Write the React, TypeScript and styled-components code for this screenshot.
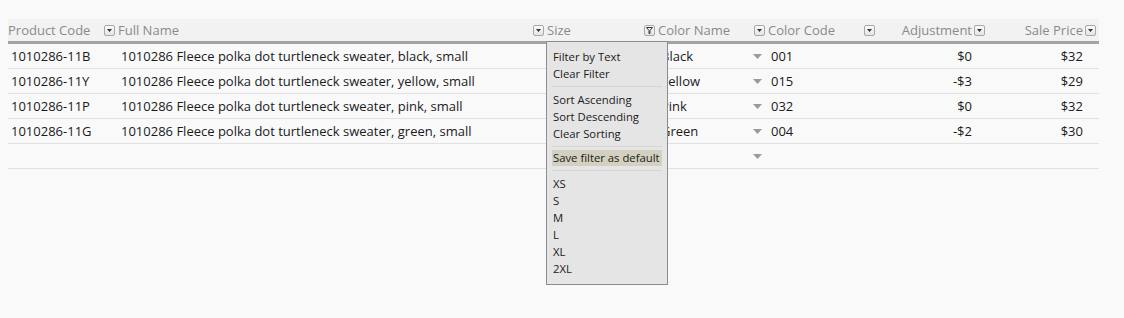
import React from "react";
import styled, { createGlobalStyle } from "styled-components";

const Global = createGlobalStyle`
  html, body { margin: 0; padding: 0; background: #f9f9f9; }
  body { font-family: "Open Sans", "Noto Sans", sans-serif; }
`;

const Page = styled.div`
  padding: 19px 0 0 8px;
  width: 1124px;
  height: 318px;
  box-sizing: border-box;
`;

const Table = styled.div`
  position: relative;
  width: 1091px;
  display: grid;
  grid-template-columns: 110px 429px 111px 110px 110px 110px 111px;
`;

const HeadCell = styled.div<{ $num?: boolean }>`
  height: 22px;
  background: #f2f2f2;
  border-bottom: 3px solid #a3a3a3;
  display: flex;
  align-items: center;
  justify-content: ${(p) => (p.$num ? "flex-end" : "space-between")};
  gap: 2px;
  padding: 0 3px 0 0;
  font-size: 13px;
  color: #8a8a8a;
  position: relative;
  white-space: nowrap;
`;

const IconBox = styled.span`
  width: 11px;
  height: 11px;
  box-sizing: border-box;
  border: 1px solid #a8a8a8;
  border-radius: 2px;
  background: linear-gradient(#fbfbfb, #e4e4e4);
  display: inline-flex;
  align-items: center;
  justify-content: center;
  flex: none;
`;

const Cell = styled.div<{ $num?: boolean }>`
  height: 25px;
  box-sizing: border-box;
  border-bottom: 1px solid #e1e1e1;
  display: flex;
  align-items: center;
  justify-content: ${(p) => (p.$num ? "flex-end" : "space-between")};
  padding: 0 ${(p) => (p.$num ? "16px" : "6px")} 0 3px;
  font-size: 13px;
  color: #1a1a1a;
  white-space: nowrap;
  overflow: hidden;
`;

const Menu = styled.div`
  position: absolute;
  left: 538px;
  top: 22px;
  width: 122px;
  height: 244px;
  box-sizing: border-box;
  background: #e5e5e5;
  border: 1px solid #8c8c8c;
  padding: 6px 5px 0 5px;
  font-size: 11.3px;
  color: #1a1a1a;
  z-index: 2;
`;

const Item = styled.div<{ $active?: boolean }>`
  height: ${(p) => (p.$active ? "16px" : "17px")};
  line-height: ${(p) => (p.$active ? "16px" : "17px")};
  padding-left: 1px;
  background: ${(p) => (p.$active ? "#d3d0c0" : "transparent")};
`;

const Sep = styled.div<{ $tight?: boolean }>`
  height: 1px;
  background: #d4d4d4;
  margin: 4px 0 ${(p) => (p.$tight ? "3px" : "4px")};
`;

const Arrow = () => (
  <svg width="9" height="5" viewBox="0 0 9 5">
    <path d="M0 0 L9 0 L4.5 5 Z" fill="#9a9a9a" />
  </svg>
);

const DropIcon = () => (
  <IconBox>
    <svg width="5" height="3" viewBox="0 0 5 3">
      <path d="M0 0 L5 0 L2.5 3 Z" fill="#333" />
    </svg>
  </IconBox>
);

const FunnelIcon = () => (
  <IconBox>
    <svg width="7" height="7" viewBox="0 0 7 7">
      <path d="M0.5 0.5 L6.5 0.5 L4 3.5 L4 6.5 L3 6.5 L3 3.5 Z" fill="none" stroke="#333" strokeWidth="1" />
    </svg>
  </IconBox>
);

type Col = { label: string; num?: boolean };
const cols: Col[] = [
  { label: "Product Code" },
  { label: "Full Name" },
  { label: "Size" },
  { label: "Color Name" },
  { label: "Color Code" },
  { label: "Adjustment", num: true },
  { label: "Sale Price", num: true },
];

const rows = [
  ["1010286-11B", "1010286 Fleece polka dot turtleneck sweater, black, small", "", "Black", "001", "$0", "$32"],
  ["1010286-11Y", "1010286 Fleece polka dot turtleneck sweater, yellow, small", "", "Yellow", "015", "-$3", "$29"],
  ["1010286-11P", "1010286 Fleece polka dot turtleneck sweater, pink, small", "", "Pink", "032", "$0", "$32"],
  ["1010286-11G", "1010286 Fleece polka dot turtleneck sweater, green, small", "", "Green", "004", "-$2", "$30"],
  ["", "", "", "", "", "", ""],
];

export default function App() {
  return (
    <Page>
      <Global />
      <Table>
        {cols.map((c, i) => (
          <HeadCell key={c.label} $num={c.num}>
            <span>{c.label}</span>
            {i === 2 ? <FunnelIcon /> : <DropIcon />}
          </HeadCell>
        ))}
        {rows.map((r, ri) =>
          r.map((v, ci) => (
            <Cell key={ri + "-" + ci} $num={cols[ci].num}>
              <span>{v}</span>
              {ci === 3 && <Arrow />}
            </Cell>
          ))
        )}
        <Menu>
          <Item>Filter by Text</Item>
          <Item>Clear Filter</Item>
          <Sep />
          <Item>Sort Ascending</Item>
          <Item>Sort Descending</Item>
          <Item>Clear Sorting</Item>
          <Sep $tight />
          <Item $active>Save filter as default</Item>
          <Sep />
          <Item>XS</Item>
          <Item>S</Item>
          <Item>M</Item>
          <Item>L</Item>
          <Item>XL</Item>
          <Item>2XL</Item>
        </Menu>
      </Table>
    </Page>
  );
}
